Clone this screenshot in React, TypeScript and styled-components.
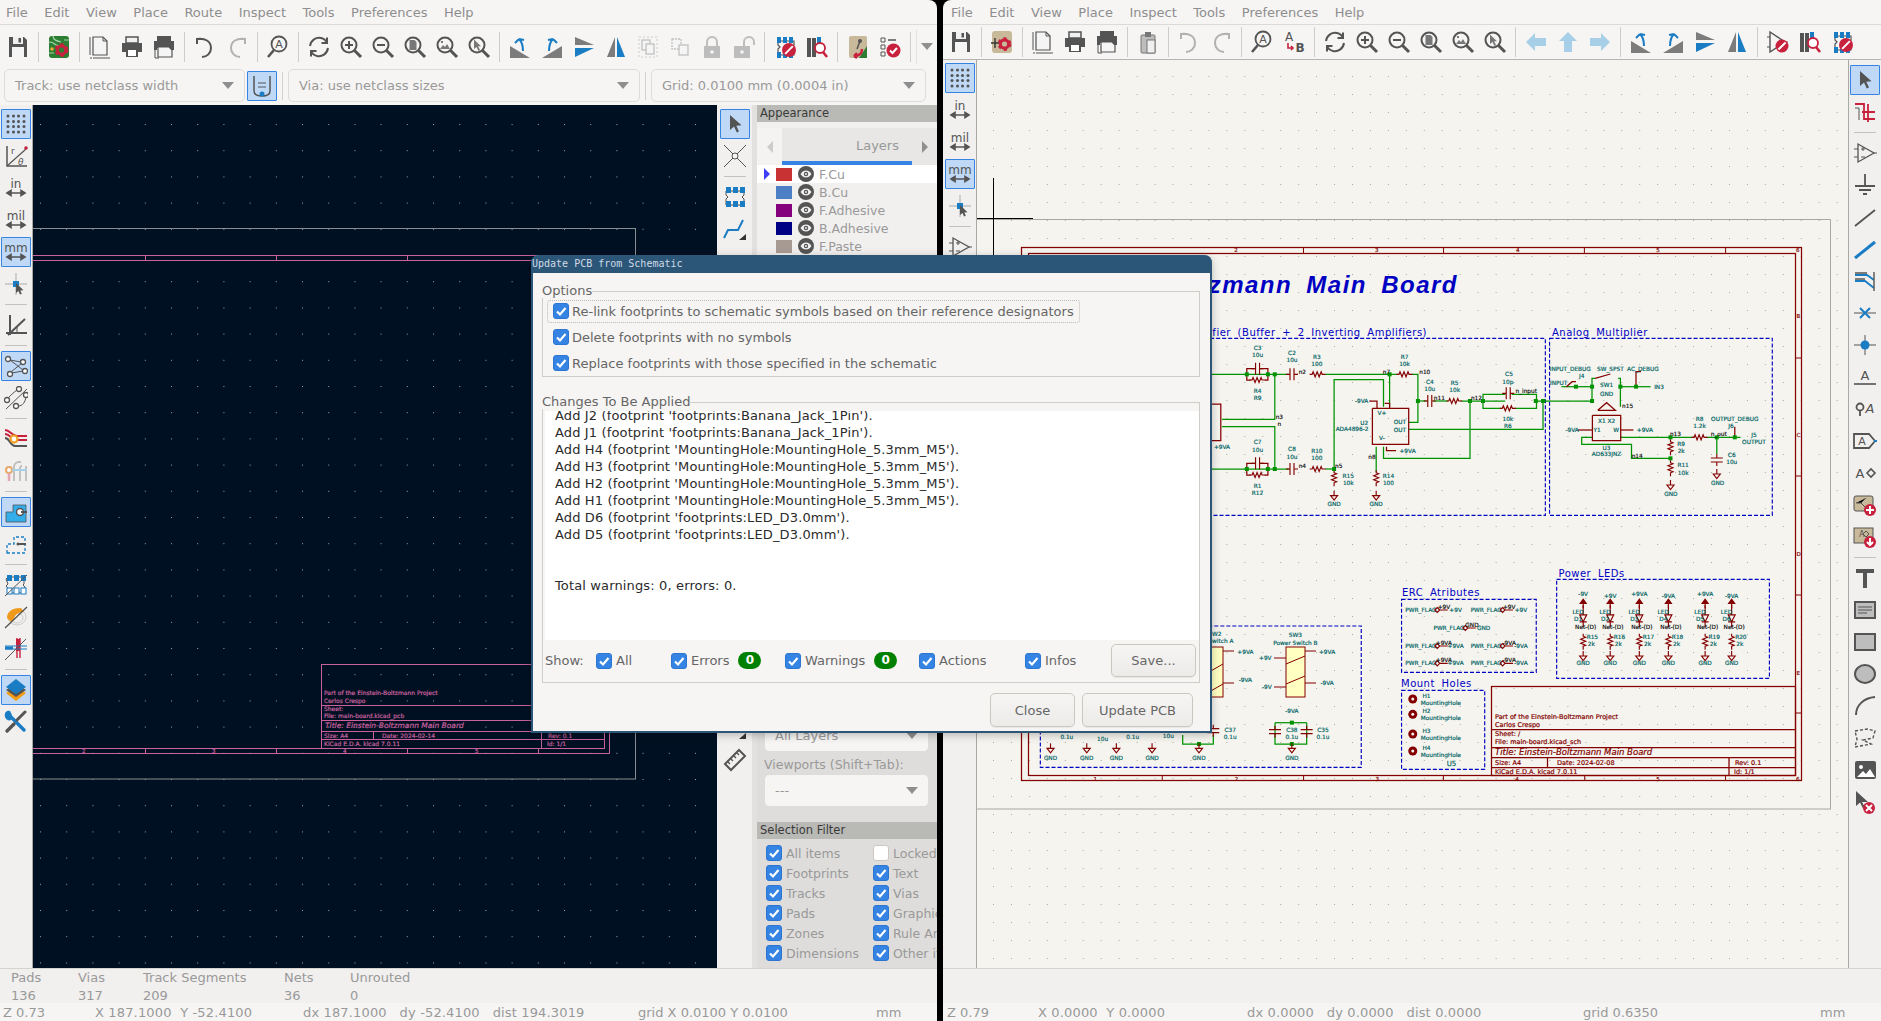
import React from 'react';
import styled, { createGlobalStyle } from 'styled-components';

const D = '#545454', B = '#1a7dc4', R = '#c8213e', G = '#bdbdbd';

const Global = createGlobalStyle`
  html, body { margin: 0; padding: 0; background: #000; overflow: hidden; }
  body { font-family: "DejaVu Sans", sans-serif; font-size: 13px; }
`;

const Desktop = styled.div`
  position: relative; width: 1881px; height: 1021px; display: flex; gap: 6px;
  background: #000; overflow: hidden;
`;
const Win = styled.div<{ $w: number; $right?: boolean }>`
  width: ${p => p.$w}px; height: 1021px; display: flex; flex-direction: column; flex: none;
  background: #f6f5f4; overflow: hidden; border-radius: ${p => (p.$right ? '8px 0 0 0' : '0 8px 0 0')};
`;
const MenuBar = styled.div<{ $pad: number }>`
  height: 24px; flex: none; display: flex; align-items: center; gap: 16.5px; padding-left: ${p => p.$pad}px;
  border-bottom: 1px solid #dcdad6; color: #8e8e8e; font-size: 13px;
`;
const Toolbar = styled.div<{ $h: number }>`
  height: ${p => p.$h}px; flex: none; display: flex; align-items: center; padding-left: 2px;
`;
const BtnBox = styled.div<{ $active?: boolean; $dim?: number }>`
  width: 30px; height: 30px; margin: 1px; flex: none; box-sizing: border-box;
  display: flex; align-items: center; justify-content: center; border-radius: 1px;
  background: ${p => (p.$active ? '#bed8f6' : 'transparent')};
  border: 1px solid ${p => (p.$active ? '#3584e4' : 'transparent')};
  & > svg { opacity: ${p => p.$dim ?? 1}; }
`;
const AuxBtn = styled(BtnBox)`
  margin: 2px 0 0 2px;
`;
const HSep = styled.div`
  width: 1px; height: 30px; margin: 0 4px; background: #cfcdc9; flex: none;
`;
const VSep = styled.div`
  width: 22px; height: 1px; margin: 4px 5px; background: #c4c2be; flex: none;
`;
const AuxBar = styled.div`
  height: 37px; flex: none; display: flex; align-items: flex-start; padding: 1px 0 0 4px; box-sizing: border-box;
`;
const Combo = styled.div<{ $w: number }>`
  width: ${p => p.$w}px; height: 33px; box-sizing: border-box; flex: none; display: flex; align-items: center;
  justify-content: space-between; padding: 0 10px; background: #f6f5f4; border: 1px solid #dedcd8;
  border-radius: 5px; color: #999; font-size: 13px;
`;
const Caret = styled.span`
  width: 0; height: 0; border-left: 6px solid transparent; border-right: 6px solid transparent;
  border-top: 7px solid #8f8f8f;
`;
const AuxSep = styled.div`
  width: 1px; height: 28px; margin: 3px 5px 0; background: #d3d1cd; flex: none;
`;
const OverflowBtn = styled.div`
  width: 20px; height: 34px; flex: none; display: flex; align-items: center; justify-content: center;
  border-left: 1px solid #e4e2df; margin-left: 1px;
`;
const Main = styled.div<{ $top?: boolean }>`
  flex: 1; min-height: 0; display: flex; ${p => (p.$top ? 'border-top: 1px solid #b4b4b0;' : '')}
`;
const VTool = styled.div<{ $w: number; $line?: 'l' | 'r'; $top: number }>`
  width: ${p => p.$w}px; flex: none; box-sizing: border-box; display: flex; flex-direction: column;
  padding-top: ${p => p.$top}px; background: #f1f0ef; overflow: hidden;
  ${p => (p.$line === 'r' ? 'border-right: 1px solid #a9a9a6;' : '')}
  ${p => (p.$line === 'l' ? 'border-left: 1px solid #a9a9a6;' : '')}
  align-items: center;
`;
const Gap = styled.div<{ $h: number }>`
  height: ${p => p.$h}px; flex: none;
`;
const PcbSvg = styled.svg`
  flex: 1; min-width: 0; display: block; background: #001023; height: 100%;
`;
const SchSvg = styled.svg`
  flex: 1; min-width: 0; display: block; background: #f5f4ef; height: 100%;
`;
const EyeSvg = styled.svg`
  width: 16px; height: 16px; margin-right: 5px; flex: none;
`;
const Side = styled.div`
  width: 185px; flex: none; display: flex; flex-direction: column; border-left: 5px solid #e2e1df;
  box-sizing: border-box; background: #f1f0ef; overflow: hidden;
`;
const PanelHead = styled.div`
  height: 17px; flex: none; background: #b9b9b6; color: #3a3a3a; font-size: 11.5px; line-height: 16px; padding-left: 3px;
`;
const TabStrip = styled.div`
  height: 37px; flex: none; margin-top: 6px; display: flex; align-items: center; background: #e8e7e6;
`;
const TabBack = styled.div`
  width: 25px; height: 37px; flex: none; background: #f4f3f2; display: flex; align-items: center; justify-content: center;
`;
const TabLabel = styled.div`
  width: 130px; height: 37px; flex: none; box-sizing: border-box; text-align: right; padding-right: 13px;
  line-height: 36px; border-bottom: 4px solid #3584e4; color: #999; font-size: 13px;
`;
const TabFwd = styled.div`
  flex: 1; display: flex; justify-content: center;
`;
const Tri = styled.span<{ $c: string }>`
  width: 0; height: 0; border-top: 6px solid transparent; border-bottom: 6px solid transparent;
  border-left: 6px solid ${p => p.$c};
`;
const TriL = styled.span`
  width: 0; height: 0; border-top: 6px solid transparent; border-bottom: 6px solid transparent;
  border-right: 6px solid #ccc;
`;
const LayerRow = styled.div<{ $on?: boolean }>`
  height: 18px; flex: none; display: flex; align-items: center; padding-left: 7px;
  background: ${p => (p.$on ? '#fff' : 'transparent')}; color: #999; font-size: 12.5px;
`;
const ArrowSlot = styled.div`
  width: 12px; flex: none; display: flex;
`;
const Swatch = styled.div<{ $c: string }>`
  width: 16px; height: 13px; flex: none; background: ${p => p.$c}; margin-right: 6px;
`;
const Spacer = styled.div`
  flex: 1;
`;
const Lower = styled.div`
  background: #dedddb; padding: 0 8px 15px 7px; flex: none;
`;
const PresetLabel = styled.div`
  color: #999; font-size: 12.5px; height: 22px; line-height: 25px;
`;
const SideCombo = styled(Combo)`
  width: 165px;
`;
const Filter = styled.div`
  background: #dedddb; height: 129px; flex: none; display: grid; grid-template-columns: 107px 107px;
  grid-auto-rows: 20px; padding: 4px 0 0 9px; box-sizing: border-box;
`;
const FilterItem = styled.div`
  display: flex; align-items: center; gap: 4px; color: #999; font-size: 12.5px; white-space: nowrap;
`;
const Box = styled.div<{ $off?: boolean }>`
  width: 16px; height: 16px; flex: none; box-sizing: border-box; border-radius: 3px;
  display: flex; align-items: center; justify-content: center;
  background: ${p => (p.$off ? '#fff' : '#3584e4')};
  border: 1px solid ${p => (p.$off ? '#cdc7c2' : '#2c76d2')};
`;
const Messages = styled.div`
  height: 35px; flex: none; background: #f1f0ef; border-top: 1px solid #d5d3cf; box-sizing: border-box;
  display: flex; color: #999; font-size: 13px;
`;
const MsgCol = styled.div<{ $w: number }>`
  width: ${p => p.$w}px; flex: none; line-height: 18px;
`;
const Status = styled.div`
  height: 18px; flex: none; display: flex; align-items: center; color: #999; font-size: 13px; white-space: pre;
`;
const Cell = styled.div<{ $w: number; $sp?: number }>`
  width: ${p => p.$w}px; flex: none; letter-spacing: ${p => p.$sp ?? 0}px;
`;

/* ---- dialog ---- */
const Dialog = styled.div`
  position: absolute; left: 531px; top: 255px; width: 681px; height: 478px; box-sizing: border-box;
  border: 2px solid #2c5678; border-top: 0; border-radius: 8px 8px 0 0; background: #f6f5f4;
  display: flex; flex-direction: column; box-shadow: 0 2px 8px rgba(0,0,0,.25);
`;
const TitleBar = styled.div`
  height: 18px; flex: none; margin: 0 -2px; background: #2c5678; border-radius: 8px 8px 0 0;
  color: #cfdbe6; font-family: "DejaVu Sans Mono", monospace; font-size: 10px; line-height: 18px; padding-left: 1px;
`;
const DlgBody = styled.div`
  flex: 1; min-height: 0; display: flex; flex-direction: column; padding: 11px 10px 0 9px;
`;
const Frame = styled.fieldset<{ $h?: number }>`
  margin: 0; padding: 0; min-width: 0; border: 1px solid #cfcdc8; box-sizing: border-box;
  display: flex; flex-direction: column; flex: none;
  height: ${p => p.$h}px;
`;
const Legend = styled.legend`
  padding: 0; margin: 0 0 0 -1px; height: 14px; line-height: 14px; color: #666; font-size: 13px;
`;
const OptRow = styled.div`
  height: 26px; flex: none; display: flex; align-items: center; gap: 3px; padding-left: 10px;
  color: #666; font-size: 13px;
`;
const Focus = styled.div`
  display: flex; align-items: center; gap: 3px; height: 23px; box-sizing: border-box; flex: none;
  padding: 0 5px; margin-left: -6px; border: 1px dotted #bdbab5; border-radius: 3px;
`;
const Log = styled.div`
  margin: 2px 0 0 2px; width: 654px; height: 229px; background: #fff; overflow: hidden; flex: none;
`;
const LogInner = styled.div`
  margin-top: -4px; padding-left: 10px; color: #2b2b2b; font-size: 13px; line-height: 17px; white-space: pre; letter-spacing: .14px;
`;
const ShowRow = styled.div`
  height: 41px; flex: none; display: flex; align-items: center; padding-left: 2px; color: #666; font-size: 13px;
`;
const ShowCell = styled.div<{ $w: number }>`
  width: ${p => p.$w}px; flex: none; display: flex; align-items: center; gap: 4px;
`;
const Badge = styled.span`
  width: 23px; height: 17px; margin-left: 5px; border-radius: 9px; background: #008000; color: #fff; font-weight: bold;
  font-size: 12px; line-height: 17px; text-align: center;
`;
const Btn = styled.div<{ $w: number; $h: number }>`
  width: ${p => p.$w}px; height: ${p => p.$h}px; flex: none; box-sizing: border-box; display: flex; align-items: center; justify-content: center;
  border: 1px solid #cdc7c2; border-radius: 5px; color: #666; font-size: 13px;
  background: linear-gradient(#f6f5f4, #edebe9); box-shadow: 0 1px 1px rgba(0,0,0,.06);
`;
const BtnRow = styled.div`
  flex: none; display: flex; justify-content: flex-end; gap: 7px; padding: 10px 7px 0 0;
`;

/* ---- svg text kinds ---- */
const Net = styled.text<{ $s?: number; $anchor?: string }>`
  font-family: "DejaVu Sans", sans-serif; font-size: ${p => p.$s ?? 5.8}px; fill: #006464; stroke: #006464; stroke-width: .18px;
  text-anchor: ${p => p.$anchor ?? 'middle'};
`;
const Lab = styled(Net)`
  fill: #111; stroke: #111;
`;
const Red = styled.text<{ $s?: number; $i?: boolean }>`
  font-family: "DejaVu Sans", sans-serif; font-size: ${p => p.$s ?? 6.5}px; fill: #840000; stroke: #840000; stroke-width: .2px;
  font-style: ${p => (p.$i ? 'italic' : 'normal')};
`;
const BlueTitle = styled.text`
  font-family: "Liberation Sans", sans-serif; font-size: 24px; font-weight: bold; font-style: italic; fill: #0000c2; text-anchor: end;
  letter-spacing: 1.5px; word-spacing: 6px;
`;
const BlueNote = styled.text<{ $end?: boolean }>`
  font-family: "DejaVu Sans", sans-serif; font-size: 10px; fill: #0000c2; letter-spacing: .5px; word-spacing: 3px;
  text-anchor: ${p => (p.$end ? 'end' : 'start')};
`;
const Pink = styled.text<{ $s?: number; $i?: boolean }>`
  font-family: "DejaVu Sans", sans-serif; font-size: ${p => p.$s ?? 6}px; fill: #c9619f; stroke: #c9619f; stroke-width: .2px;
  font-style: ${p => (p.$i ? 'italic' : 'normal')};
`;

/* ---- icons ---- */
const Mag = ({ c }: { c?: React.ReactNode }) => (
  <>
    <circle cx="10" cy="10" r="7.5" fill="none" stroke={D} strokeWidth="2" />
    <path d="M15.5 15.5 22 22" stroke={D} strokeWidth="3" />
    {c}
  </>
);
const Gear = ({ x, y, r }: { x: number; y: number; r: number }) => (
  <>
    <circle cx={x} cy={y} r={r} fill="none" stroke={R} strokeWidth={r * 0.5} strokeDasharray={`${r * 0.55} ${r * 0.55}`} />
    <circle cx={x} cy={y} r={r * 0.75} fill="none" stroke={R} strokeWidth={r * 0.55} />
  </>
);
const Check = () => (
  <svg width="12" height="12" viewBox="0 0 12 12"><path d="M2 6.5 5 9.5 10.5 3" fill="none" stroke="#fff" strokeWidth="2.2" /></svg>
);
const NoCircle = ({ x = 17, y = 17, r = 6 }: { x?: number; y?: number; r?: number }) => (
  <>
    <circle cx={x} cy={y} r={r} fill={R} />
    <path d={`M${x - r * 0.55} ${y + r * 0.55}L${x + r * 0.55} ${y - r * 0.55}`} stroke="#fff" strokeWidth="2" />
  </>
);
const FpPads = () => (
  <>
    <path d="M5 6h16v4l-2 2 2 2v6H5v-6l2-2-2-2z" fill="none" stroke={D} strokeWidth="1.2" />
    {[4, 10, 16].map(x => <rect key={x} x={x} y="2" width="4" height="6" fill={B} />)}
    {[4, 10, 16].map(x => <rect key={x + 1} x={x} y="17" width="4" height="6" fill={B} />)}
  </>
);
const UnitIcon = ({ t, s }: { t: string; s: number }) => (
  <>
    <text x="12" y="12" textAnchor="middle" fontFamily="DejaVu Sans, sans-serif" fontSize={s} fill={D}>{t}</text>
    <path d="M3 17h18M3 17l4-2.5v5zM21 17l-4-2.5v5z" stroke={D} strokeWidth="1.6" fill={D} />
  </>
);
const Arrow = () => <path d="M7 3v15l4-3.5 2.8 6 2.2-1-2.7-5.8 5.2-.4z" fill={D} />;

const icons: Record<string, React.ReactNode> = {
  save: <><path fill={D} d="M3 2h15l3 3v17H3z" /><rect x="7" y="2" width="10" height="7" fill="#f0f0f0" /><rect x="12.5" y="3" width="2.5" height="4.5" fill={D} /><rect x="6" y="12" width="12" height="10" fill="#f5f5f5" /></>,
  pcbgear: <><rect x="2" y="1" width="20" height="22" rx="3" fill="#2d7d32" /><path d="M2 7c6 0 6 4 10 4M6 1c0 4 4 5 8 6M22 5h-5M2 18h5" stroke="#a3d6ad" fill="none" strokeWidth="1.2" /><circle cx="5" cy="14" r="1.800" fill="#f0a93a" /><Gear x={14.5} y={15} r={5.5} /></>,
  schgear: <><rect x="2" y="1" width="20" height="22" rx="3" fill="#c8b99a" /><path d="M1 13h8M5 8v10" stroke="#333" strokeWidth="1.4" /><Gear x={14.5} y={14} r={5.5} /></>,
  page: <><path d="M5 2h10l4 4v14H5z" fill="#f4f4f4" stroke={D} strokeWidth="1.2" /><path d="M15 2v4h4M2 2v18M22 23H5M2 23h2" stroke={D} strokeWidth="1" fill="none" /></>,
  print: <><path d="M6 2h12v6H6z" fill="#f0f0f0" stroke={D} strokeWidth="1.5" /><path d="M2 8h20v9h-4v-3H6v3H2z" fill={D} /><path d="M6 14h12v8H6z" fill={D} /><rect x="8" y="15" width="8" height="6" fill="#fff" /></>,
  plot: <><path d="M5 1h14v5H5z" fill={D} /><path d="M2 6h20v9h-3v-2H5v2H2z" fill={D} /><path d="M6 12h11l3 3v7H6z" fill="#f5f5f5" stroke={D} strokeWidth="1.2" /><path d="M3 23h4M3 15v8" stroke={D} /></>,
  undo: <path d="M9 4H4v5M4 4c8-1 14 2 14 9 0 5-4 9-9 9" fill="none" stroke={D} strokeWidth="2" />,
  redo: <path d="M15 4h5v5M20 4c-8-1-14 2-14 9 0 5 4 9 9 9" fill="none" stroke={D} strokeWidth="2" />,
  find: <><circle cx="13" cy="9" r="7.5" fill="none" stroke={D} strokeWidth="1.8" /><text x="13" y="13" textAnchor="middle" fontSize="11" fontFamily="DejaVu Sans, sans-serif" fill={D}>A</text><path d="M8 15 2 22" stroke={D} strokeWidth="2.6" /></>,
  replace: <><text x="7" y="11" textAnchor="middle" fontSize="12" fontFamily="DejaVu Sans, sans-serif" fill={D}>A</text><text x="18" y="22" textAnchor="middle" fontSize="12" fontWeight="bold" fontFamily="DejaVu Sans, sans-serif" fill={D}>B</text><path d="M6 13v5h5M9 16l2 2-2 2" stroke={R} strokeWidth="1.6" fill="none" /></>,
  refresh: <path d="M3 11C4 5 9 2 14 3c3 .7 5 2.500 6 5M20 2.500V8h-5.500M21 13c-1 6-6 9-11 8-3-.7-5-2.500-6-5M4 21.500V16h5.500" fill="none" stroke={D} strokeWidth="2" />,
  zin: <Mag c={<path d="M10 6v8M6 10h8" stroke={D} strokeWidth="2" />} />,
  zout: <Mag c={<path d="M6 10h8" stroke={D} strokeWidth="2" />} />,
  zfit: <Mag c={<path d="M6.500 5h5l2 2v8h-7z" fill="#777" />} />,
  zobj: <Mag c={<path d="M5 14l3-4 2 2 2-3 3 5z M6 6h2v2H6z" fill="#777" />} />,
  zsel: <Mag c={<path d="M7 4.500v9.500l2.500-2 2 4 1.600-.8-2-4H14z" fill="#777" />} />,
  rotl: <><path d="M2 23V11l20 12z" fill="#7c7c7c" /><path d="M15 16C15 11 14 7 11 4M11 4 7 8M11 4l5 1" fill="none" stroke={B} strokeWidth="2" /></>,
  rotr: <><path d="M22 23V11L2 23z" fill="#7c7c7c" /><path d="M9 16c0-5 1-9 4-12M13 4l4 4M13 4 8 5" fill="none" stroke={B} strokeWidth="2" /></>,
  flip: <><path d="M3 2l19 8H3z" fill="#7c7c7c" /><path d="M3 13h19L3 22z" fill={B} /></>,
  mirror: <><path d="M11 2v20H3z" fill="#7c7c7c" /><path d="M13 2v20h8z" fill={B} /></>,
  group: <><rect x="3" y="2" width="18" height="20" fill="none" stroke="#ccc" strokeDasharray="2 2" /><rect x="6" y="5" width="8" height="10" fill="#f5f5f5" stroke="#c0c0c0" strokeWidth="1.3" /><rect x="10" y="9" width="8" height="10" fill="#f5f5f5" stroke="#c0c0c0" strokeWidth="1.3" /></>,
  ungroup: <><rect x="4" y="4" width="9" height="10" fill="#f5f5f5" stroke="#c0c0c0" strokeWidth="1.3" strokeDasharray="2 1" /><rect x="11" y="10" width="9" height="10" fill="#f5f5f5" stroke="#c0c0c0" strokeWidth="1.3" /></>,
  lock: <><path d="M7 11V7a5 5 0 0 1 10 0v4" fill="none" stroke={G} strokeWidth="2" /><rect x="4" y="11" width="16" height="12" fill={G} /><circle cx="12" cy="17" r="1.800" fill="#f5f5f5" /></>,
  unlock: <><path d="M12 11V7a5 5 0 0 1 10 0v3" fill="none" stroke={G} strokeWidth="2" /><rect x="2" y="11" width="16" height="12" fill={G} /><circle cx="10" cy="17" r="1.800" fill="#f5f5f5" /></>,
  fpupd: <><FpPads /><NoCircle x={16} y={15} r={7} /></>,
  lib: <><rect x="2" y="3" width="4" height="19" fill={D} /><rect x="7" y="3" width="4" height="19" fill={D} /><rect x="12" y="2" width="4" height="12" fill={B} /><circle cx="15" cy="13" r="5" fill="#fff" stroke={R} strokeWidth="1.8" /><path d="M18 17l4 5" stroke={R} strokeWidth="2.6" /></>,
  net: <><rect x="3" y="1" width="18" height="22" rx="2" fill="#c8b99a" /><path d="M13 23h8V11z" fill="#2d7d32" /><circle cx="14" cy="6" r="2" fill={D} /><path d="M14 6 11 14" stroke={D} strokeWidth="1.600" /><path d="M16 14c0 5-3 7-8 7M8 21l3-3M8 21l3 2" fill="none" stroke={R} strokeWidth="2.400" /></>,
  check: <><path d="M3 3h4v4H3zM3 10h4v4H3zM3 17h4v4H3z" fill="none" stroke={D} /><path d="M10 5h8M10 12h2" stroke={D} strokeWidth="1.500" /><circle cx="15.500" cy="15.500" r="7" fill={R} /><path d="M12 15.500l2.500 2.500 4.500-5" fill="none" stroke="#fff" strokeWidth="2" /></>,
  paste: <><rect x="5" y="5" width="14" height="18" rx="1" fill="#bdbdbd" stroke="#777" /><rect x="9" y="2" width="6" height="5" fill="#777" /><rect x="11" y="10" width="8" height="13" fill="#f0f0f0" stroke="#777" /></>,
  left: <path d="M2 12 11 3v5h11v8H11v5z" fill="#a7d0e8" />,
  up: <path d="M12 2l9 9h-5v11H8V11H3z" fill="#a7d0e8" />,
  right: <path d="M22 12l-9-9v5H2v8h11v5z" fill="#a7d0e8" />,
  sym: <><path d="M4 2v20l15-10z" fill="none" stroke={D} strokeWidth="1.400" /><path d="M1 7h3M1 17h3M19 12h3" stroke={D} /><NoCircle x={16} y={16} r={6.500} /></>,
  dots: <g fill={D}>{[4, 9.500, 14.500, 20].flatMap(y => [4, 9.500, 14.500, 20].map(x => <circle key={`${x}-${y}`} cx={x} cy={y} r="1.500" />))}</g>,
  polar: <><path d="M3 2v20h20" stroke={D} strokeWidth="1.500" fill="none" /><path d="M3 22 22 5" stroke={D} strokeWidth="1.200" /><circle cx="22" cy="4" r="1.800" fill={R} /><text x="7" y="10" fontSize="9" fontFamily="DejaVu Sans, sans-serif" fill={D}>r</text><text x="14" y="21" fontSize="9" fontStyle="italic" fontFamily="DejaVu Sans, sans-serif" fill={D}>θ</text></>,
  in: <UnitIcon t="in" s={12} />, mil: <UnitIcon t="mil" s={12} />, mm: <UnitIcon t="mm" s={12} />,
  cursor: <><path d="M12 1v22M1 12h22" stroke="#aaa" /><path d="M9 9h6v6H9z" fill={B} /><path d="M12 11v10l2.500-2 1.500 3.500 1.800-.8-1.500-3.300 3.200-.2z" fill={D} /></>,
  origin: <><path d="M6 2v20M2 20h21" stroke={D} strokeWidth="2" /><path d="M4 22 21 6" stroke={D} strokeWidth="2" /><path d="M13 14v6" stroke={D} /></>,
  rats: <><g fill="#fff" stroke={D} strokeWidth="1.300"><circle cx="4" cy="5" r="2.500" /><circle cx="19" cy="8" r="2.500" /><circle cx="21" cy="17" r="2.500" /><circle cx="6" cy="20" r="2.500" /></g><path d="M6 6l11 2M6 6l13 10M7 18 18 9M8 19l11-2" stroke={D} fill="none" /></>,
  ratsc: <><g fill="#fff" stroke={D} strokeWidth="1.300"><circle cx="15" cy="3" r="2.500" /><circle cx="22" cy="9" r="2.500" /><circle cx="3" cy="14" r="2.500" /><circle cx="12" cy="20" r="2.500" /></g><path d="M2 23 23 3" stroke={D} /><path d="M4 12c3-3 5-5 9-8M14 20c5 0 7-4 8-9" stroke={D} fill="none" /></>,
  track: <><path d="M1 3c5 0 7 6 12 6h10" stroke={R} strokeWidth="2" fill="none" /><path d="M1 7c5 0 7 6 12 6h10" stroke={R} strokeWidth="2" fill="none" /><path d="M1 11c5 0 5 8 10 8h12" stroke={D} strokeWidth="2" fill="none" /><circle cx="10" cy="12" r="3.500" fill="#fff" stroke="#f0a020" strokeWidth="2.200" /></>,
  via: <><path d="M10 22V8a5 5 0 0 1 5-5h2M16 22V9a2 2 0 0 1 2-2M22 22V7" stroke={G} strokeWidth="1.800" fill="none" /><circle cx="5" cy="11" r="3" fill="#fff" stroke="#e8a86a" strokeWidth="2" /><path d="M5 14v8" stroke="#e6a8b0" strokeWidth="2.600" /><path d="M8 11h15" stroke="#a7cfe8" strokeWidth="2" /></>,
  fp: <><path d="M2 22V12h7V5h13v17z" fill="#33aeea" stroke={D} strokeWidth=".8" /><circle cx="16" cy="12" r="3.500" fill="#fff" stroke={D} strokeWidth="1.500" /><path d="M17 12h6" stroke={D} strokeWidth="2" /></>,
  fpo: <><path d="M3 21V12h7V5h11v16z" fill="none" stroke={B} strokeWidth="1.300" strokeDasharray="3 2" /><path d="M14 12h8" stroke={D} strokeWidth="2" /><circle cx="14" cy="12" r="1.500" fill={D} /></>,
  pads: <><path d="M2 6l2-2h16v7l-1 1 2 2v6H4v-5l-2-2 2-2z" fill="none" stroke={D} /><g fill={B}>{[3, 10, 17].map(x => <rect key={x} x={x} y="2" width="5" height="6" />)}</g><g fill="#fff" stroke={B}>{[3, 10, 17].map(x => <rect key={x} x={x} y="15" width="5" height="6" />)}</g><path d="M1 23 23 2" stroke={D} /></>,
  padsb: <><path d="M3 6h18v4l-2 2 2 2v6H3v-6l2-2-2-2z" fill="none" stroke={D} /><g fill={B}>{[3, 10, 17].flatMap(x => [<rect key={x} x={x} y="2" width="5" height="6" />, <rect key={x + 1} x={x} y="16" width="5" height="6" />])}</g></>,
  zone: <><ellipse cx="13" cy="12" rx="9" ry="8" fill="none" stroke="#ccc" /><ellipse cx="13" cy="13" rx="6" ry="5" fill="none" stroke="#ccc" /><path d="M3 13c0-7 6-10 14-10l3 4c-5 0-9 2-10 7l-3 3z" fill="#ef9a1a" /><path d="M1 23 23 2" stroke={D} strokeWidth="1.300" /></>,
  tracks: <><path d="M13 1v20M16 1v20" stroke={R} strokeWidth="1.400" /><rect x="12" y="2" width="4" height="12" fill={R} /><path d="M1 11h8" stroke={B} strokeWidth="3" /><path d="M1 12h22M1 9h22" stroke={B} strokeWidth="1" /><path d="M1 23 22 2" stroke={D} /></>,
  layers: <><path d="M12 9l10 6-10 8-10-8z" fill="#f39c12" /><path d="M12 6l10 6-10 7-10-7z" fill={D} /><path d="M12 1l10 8-10 7-10-7z" fill={B} /></>,
  wrench: <><path d="M6 6 20 20" stroke={B} strokeWidth="3.400" strokeLinecap="round" /><path d="M2 3l3 3 3-1-2-4C3 0 0 2 1 7c1 3 4 4 6 3l1-3z" fill={B} /><path d="M21 2 13 10" stroke={D} strokeWidth="3" strokeLinecap="round" /><path d="M10 14 3 21" stroke={D} strokeWidth="3.400" strokeLinecap="round" /></>,
  arrow: <Arrow />,
  cross: <><path d="M1 1l22 22M23 1 1 23" stroke={D} /><circle cx="12" cy="12" r="3" fill="#f5f5f5" stroke={D} /></>,
  trk: <><path d="M1 21l4-8h10l5-10" fill="none" stroke={B} strokeWidth="2" /><path d="M23 23h-7l7-6z" fill="#333" /></>,
  dim: <><path d="M2 3h17M2 6v-6" stroke={D} fill="none" /><path d="M23 23h-7l7-6z" fill="#333" /></>,
  ruler: <><path d="M16 2l6 6L8 22l-6-6z" fill="none" stroke={D} strokeWidth="2" /><path d="M8 11l2 2M11 8l2 2M14 5l2 2M5 14l2 2" stroke={D} strokeWidth="1.400" /></>,
  wirebus: <><path d="M2 4h9v15h11M15 4v18M9 12h13" stroke={R} strokeWidth="1.800" fill="none" /><path d="M2 8h4v12" stroke={D} fill="none" /></>,
  opamp: <><path d="M5 3v18l16-9z" fill="none" stroke={D} strokeWidth="1.300" /><path d="M1 8h4M1 16h4M21 12h3" stroke={D} /><path d="M8 8h4M10 6v4M8 16h4" stroke={D} /></>,
  gnd: <path d="M12 1v12M2 13h20M6 17h12M10 21h4" stroke={D} strokeWidth="1.800" />,
  line: <path d="M2 21 22 5" stroke={D} strokeWidth="1.800" />,
  bus: <path d="M2 21 22 5" stroke={B} strokeWidth="3" />,
  entry: <><path d="M2 6h12l7 5M2 12h10l9 7" stroke={B} strokeWidth="1.800" fill="none" /><path d="M2 4h12M2 10h10M21 3v19" stroke={D} strokeWidth="1.400" /></>,
  nc: <><path d="M1 12h22" stroke={D} /><path d="M7 7l10 10M17 7 7 17" stroke={B} strokeWidth="2" /></>,
  junction: <><path d="M1 12h22M12 2v20" stroke={D} /><circle cx="12" cy="12" r="4.500" fill={B} /></>,
  label: <><text x="12" y="15" textAnchor="middle" fontSize="13" fontFamily="DejaVu Sans, sans-serif" fill={D}>A</text><path d="M1 19h22" stroke={D} strokeWidth="1.600" /></>,
  netclass: <><circle cx="7" cy="10" r="3.500" fill="none" stroke={D} strokeWidth="1.800" /><path d="M7 14v5" stroke={D} strokeWidth="1.800" /><text x="17" y="16" textAnchor="middle" fontSize="13" fontStyle="italic" fontFamily="DejaVu Sans, sans-serif" fill={D}>A</text></>,
  hlabel: <><path d="M1 5h15l6 7-6 7H1z" fill="none" stroke={D} strokeWidth="1.800" /><text x="9" y="16" textAnchor="middle" fontSize="11" fontFamily="DejaVu Sans, sans-serif" fill={D}>A</text><path d="M21 12h3" stroke={B} strokeWidth="2" /></>,
  global: <><text x="7" y="17" textAnchor="middle" fontSize="13" fontFamily="DejaVu Sans, sans-serif" fill={D}>A</text><path d="M14 12l4-4 4 4-4 4z" fill="none" stroke={D} strokeWidth="1.600" /></>,
  sheet: <><rect x="1" y="3" width="19" height="15" rx="2" fill="#c8b99a" stroke={D} /><path d="M3 10h5l5-5M8 10l5 5" stroke={D} /><circle cx="17" cy="17" r="6" fill={R} /><path d="M13 17h8M17 13v8" stroke="#fff" strokeWidth="2" /></>,
  imp: <><rect x="1" y="3" width="19" height="15" fill="#c8b99a" stroke={D} /><text x="6" y="12" fontSize="8" fontFamily="DejaVu Sans, sans-serif" fill={D}>A</text><path d="M10 9l3-3 3 3-3 3z" fill="none" stroke={D} /><circle cx="17" cy="17" r="6" fill={R} /><path d="M17 13v7M14 17l3 3 3-3" stroke="#fff" strokeWidth="2" fill="none" /></>,
  T: <path d="M3 3h18v4H14v15h-4V7H3z" fill={D} />,
  tbox: <><rect x="2" y="4" width="20" height="16" fill="#bdbdbd" stroke={D} strokeWidth="2" /><path d="M5 9h14M5 12h14M5 15h9" stroke={D} /></>,
  rect: <rect x="2" y="4" width="20" height="16" fill="#bdbdbd" stroke={D} strokeWidth="2" />,
  circ: <ellipse cx="12" cy="12" rx="10" ry="9" fill="#bdbdbd" stroke={D} strokeWidth="2" />,
  arc: <path d="M3 21C3 11 11 4 22 3" fill="none" stroke={D} strokeWidth="2" />,
  bez: <path d="M2 5l12-2 8 2-2 7-10 2 8 4-16 3 2-8z" fill="none" stroke={D} strokeWidth="1.400" strokeDasharray="3 2" />,
  image: <><rect x="2" y="3" width="21" height="18" rx="2" fill={D} /><circle cx="8" cy="9" r="2" fill="#fff" /><path d="M4 19l6-6 3 3 4-5 5 8z" fill="#fff" /></>,
  del: <><path d="M3 1v15l4-3.500 3 6 2-1-3-5.500h6z" fill={D} /><circle cx="16" cy="18" r="6" fill={R} /><path d="M13 15l6 6M19 15l-6 6" stroke="#fff" strokeWidth="2" /></>,
  trackw: <><path d="M4 2v15c0 3 2 5 8 5s8-2 8-5V2" fill="none" stroke={D} strokeWidth="1.500" /><path d="M8 9h8M8 13h8" stroke={D} /><circle cx="12" cy="20" r="2.500" fill={B} /></>,
};

const Ic = ({ n }: { n: string }) => <svg width="24" height="24" viewBox="0 0 24 24">{icons[n]}</svg>;

/* spec strings: "|" separator, "*" active, "~" dimmed */
const parse = (s: string) => s.trim().split(/\s+/);
const Tools = ({ spec, vert }: { spec: string; vert?: boolean }) => (
  <>
    {parse(spec).map((t, i) => {
      if (t === '|') return vert ? <VSep key={i} /> : <HSep key={i} />;
      const active = t.startsWith('*');
      const dim = t.startsWith('~');
      return (
        <BtnBox key={i} $active={active} $dim={dim ? 0.42 : 1}>
          <Ic n={t.replace(/^[*~]/, '')} />
        </BtnBox>
      );
    })}
  </>
);

const Menu = ({ items, pad }: { items: string[]; pad: number }) => (
  <MenuBar $pad={pad}>{items.map(m => <span key={m}>{m}</span>)}</MenuBar>
);

/* ---- schematic drawing ---- */
type Z = (x: number, y: number) => [number, number];
const z7: Z = (x, y) => [1200 + x / 2.613, 230 + y / 3];
const z8: Z = (x, y) => [1000 + x / 1.96, 540 + y / 3];

const Wire = ({ p, z, c = '#009300' }: { p: number[]; z: Z; c?: string }) => {
  const pts: string[] = [];
  for (let i = 0; i < p.length; i += 2) pts.push(z(p[i], p[i + 1]).map(n => n.toFixed(1)).join(','));
  return <polyline points={pts.join(' ')} fill="none" stroke={c} strokeWidth="1.250" />;
};
const Dash = ({ r, z }: { r: number[]; z: Z }) => {
  const [a, b] = z(r[0], r[1]);
  const [c, d] = z(r[2], r[3]);
  return <rect x={a} y={b} width={c - a} height={d - b} fill="none" stroke="#0000c2" strokeWidth="1.150" strokeDasharray="4 2" />;
};
const Place = ({ at, z, rot, children }: { at: number[]; z: Z; rot?: number; children: React.ReactNode }) => {
  const [x, y] = z(at[0], at[1]);
  return <g transform={`translate(${x} ${y}) rotate(${rot ?? 0})`} stroke="#840000" fill="none" strokeWidth="1.150">{children}</g>;
};
const ResG = () => <path d="M-8 0h2.500l1-2.500 2 5 2-5 2 5 2-5 1 2.500H8" />;
const CapG = () => <path d="M-6 0h4M-2-6V6M2-6V6M2 0h4" />;
const GndG = () => <><path d="M0-5V0" /><path d="M-3.500 0h7L0 4.500z" /></>;
const PwrG = () => <><path d="M0 5V0" /><path d="M-3 0h6L0-4z" fill="#840000" /></>;

const Res = ({ a, z, v }: { a: number[]; z: Z; v?: boolean }) => <Place at={a} z={z} rot={v ? 90 : 0}><ResG /></Place>;
const Cap = ({ a, z, v }: { a: number[]; z: Z; v?: boolean }) => <Place at={a} z={z} rot={v ? 90 : 0}><CapG /></Place>;
const Gnd = ({ a, z }: { a: number[]; z: Z }) => <Place at={a} z={z}><GndG /></Place>;
const Pwr = ({ a, z }: { a: number[]; z: Z }) => <Place at={a} z={z}><PwrG /></Place>;
const Dot = ({ a, z }: { a: number[]; z: Z }) => {
  const [x, y] = z(a[0], a[1]);
  return <rect x={x - 2} y={y - 2} width="4" height="4" fill="#009300" />;
};
const T = ({ a, z, t, kind, s, anchor }: { a: number[]; z: Z; t: string; kind?: 'l'; s?: number; anchor?: string }) => {
  const [x, y] = z(a[0], a[1]);
  const C = kind === 'l' ? Lab : Net;
  return <C x={x} y={y + 2} $s={s} $anchor={anchor}>{t}</C>;
};

const wires7 = [
  [30, 433, 235, 433], [198, 433, 198, 568, 60, 568], [60, 590, 198, 590, 198, 717], [30, 717, 235, 717],
  [330, 433, 520, 433], [555, 433, 572, 433, 572, 577, 548, 577], [353, 717, 353, 449, 482, 449, 482, 530], [498, 433, 498, 530],
  [330, 717, 353, 717], [572, 513, 595, 513], [612, 513, 650, 513], [685, 513, 800, 513], [708, 513, 708, 685, 482, 685, 482, 650],
  [742, 513, 742, 493, 800, 493], [817, 493, 882, 493, 882, 535, 825, 535], [790, 535, 742, 535, 742, 513], [882, 513, 1027, 513],
  [899, 513, 899, 598, 548, 598], [947, 470, 1027, 470], [1035, 445, 1027, 445, 1027, 513], [1095, 445, 1101, 445, 1101, 530],
  [1101, 470, 1180, 470], [1102, 622, 1290, 622], [1325, 622, 1415, 622], [1028, 622, 1000, 622, 1000, 643, 1130, 643, 1130, 685, 1232, 685],
  [1353, 622, 1353, 672], [463, 650, 463, 725],
];
const dots7 = [[125, 433], [180, 433], [198, 433], [125, 717], [180, 717], [198, 717], [353, 717], [498, 433], [572, 513], [708, 513], [742, 513], [880, 513], [899, 513], [985, 470], [1027, 470], [1027, 513], [1101, 470], [1142, 470], [1232, 622], [1232, 685], [1353, 622], [1400, 622]];
const res7h = [[153, 450], [310, 433], [537, 433], [667, 513], [807, 535], [153, 735], [310, 717], [1308, 622]];
const res7v = [[353, 745], [463, 745], [1232, 652], [1232, 715]];
const cap7h = [[153, 416], [243, 433], [603, 513], [808, 490], [153, 700], [243, 717]];
const gnd7 = [[353, 797], [463, 797], [1232, 765], [1353, 732]];
const text7: [number, number, string][] = [
  [153, 353, 'C3'], [153, 374, '10u'], [153, 482, 'R4'], [153, 503, 'R9'], [243, 370, 'C2'], [243, 390, '10u'], [308, 380, 'R3'], [308, 401, '100'],
  [537, 380, 'R7'], [537, 401, '10k'], [603, 455, 'C4'], [603, 476, '10u'], [668, 460, 'R5'], [668, 481, '10k'], [810, 433, 'C5'], [807, 455, '10p'],
  [807, 567, '10k'], [807, 588, 'R6'], [153, 637, 'C7'], [153, 659, '10u'], [153, 767, 'R1'], [153, 788, 'R12'], [243, 658, 'C8'], [243, 680, '10u'],
  [308, 662, 'R10'], [308, 684, '100'], [390, 738, 'R15'], [390, 760, '10k'], [495, 738, 'R14'], [495, 760, '100'], [353, 823, 'GND'], [463, 823, 'GND'],
  [432, 578, 'U2'], [400, 598, 'ADA4896-2'], [60, 652, '+9VA'], [970, 417, 'INPUT_DEBUG'], [1075, 417, 'SW_SPST'], [1160, 417, 'AC_DEBUG'], [940, 460, 'INPUT'],
  [1000, 438, 'J4'], [1065, 466, 'SW1'], [1065, 491, 'GND'], [1065, 653, 'U3'], [1065, 673, 'AD633JNZ'], [1308, 567, 'R8'], [1308, 588, '1.2k'],
  [1400, 567, 'OUTPUT_DEBUG'], [1390, 588, 'J6'], [1450, 636, 'OUTPUT'], [1450, 615, 'J5'], [1260, 642, 'R9'], [1260, 663, '2k'], [1265, 706, 'R11'], [1265, 728, '10k'],
  [1233, 792, 'GND'], [1355, 760, 'GND'], [1392, 674, 'C6'], [1392, 696, '10u'], [1202, 471, 'IN3'], [975, 600, '-9VA'], [1165, 600, '+9VA'], [425, 513, '-9VA'], [545, 663, '+9VA'],
  [478, 548, 'V+'], [478, 625, 'V-'], [525, 575, 'OUT'], [525, 600, 'OUT'], [1065, 572, 'X1 X2'], [1040, 600, 'Y1'], [1090, 600, 'W'],
];
const labels7: [number, number, string][] = [
  [270, 426, 'n2'], [210, 560, 'n3'], [210, 582, 'n'], [490, 426, 'n7'], [590, 426, 'n10'], [628, 505, 'n11'], [725, 505, 'n12'], [855, 484, 'n_input'],
  [365, 708, 'n5'], [270, 708, 'n4'], [1120, 529, 'n15'], [1245, 612, 'n13'], [1145, 677, 'n14'], [1358, 612, 'n_out'], [452, 681, 'n8'],
];

const wires8 = [[360, 585, 360, 612, 420, 612, 420, 585], [541, 575, 541, 612, 603, 612, 603, 575], [541, 548, 603, 548], [541, 575, 541, 548], [603, 575, 603, 548]];
const caps8 = [[420, 572], [541, 575], [603, 575]];
const gnd8 = [[101, 625], [172, 625], [230, 625], [300, 625], [392, 625], [574, 625]];
const text8: [number, number, string][] = [
  [101, 655, 'GND'], [172, 655, 'GND'], [230, 655, 'GND'], [300, 655, 'GND'], [392, 655, 'GND'], [574, 655, 'GND'], [574, 512, '-9VA'],
  [133, 591, '0.1u'], [203, 597, '10u'], [262, 591, '0.1u'], [332, 588, '10u'], [453, 570, 'C37'], [453, 591, '0.1u'], [574, 570, 'C38'], [574, 591, '0.1u'], [635, 570, 'C35'], [635, 591, '0.1u'],
  [581, 285, 'SW3'], [581, 308, 'Power Switch B'], [423, 282, 'SW2'], [435, 303, 'Switch A'], [522, 353, '+9V'], [525, 441, '-9V'], [483, 335, '+9VA'], [483, 420, '-9VA'], [643, 335, '+9VA'], [643, 430, '-9VA'],
];

const ercRows: [number, number, string][] = [[827, 210, '+9V'], [955, 210, '+9V'], [882, 264, 'GND'], [827, 318, '+9VA'], [955, 318, '-9VA'], [827, 370, '+9VA'], [955, 370, '-9VA']];
const ledCols = [1145, 1198, 1255, 1312, 1384, 1436];
const mounts: [number, string][] = [[477, 'H1'], [523, 'H2'], [582, 'H3'], [633, 'H4']];
const ticksTop = [273, 639, 1007, 1376];
const numsTop: [number, string][] = [[92, '2'], [460, '3'], [828, '4'], [1195, '5'], [1560, '6']];
const ticksBot = [320, 597, 871, 1148, 1424];
const numsBot: [number, string][] = [[185, '1'], [462, '2'], [738, '3'], [1012, '4'], [1288, '5'], [1562, '6']];
const sideTicks = [358, 476, 595, 713];

const Line = ({ x1, y1, x2, y2, c }: { x1: number; y1: number; x2: number; y2: number; c: string }) => (
  <line x1={x1} y1={y1} x2={x2} y2={y2} stroke={c} strokeWidth="1" />
);

const Schematic = () => (
  <SchSvg>
    <defs>
      <pattern id="schdots" x="994" y="76" width="17.95" height="18" patternUnits="userSpaceOnUse">
        <rect width="1" height="1" fill="#a9a9a5" />
      </pattern>
    </defs>
    <g transform="translate(-978 -60)">
      <rect x="978" y="60" width="870" height="908" fill="url(#schdots)" />
      <rect x="960" y="219.500" width="871.500" height="589.500" fill="none" stroke="#a8a8a4" />
      <rect x="1022.500" y="247.500" width="780" height="533" fill="none" stroke="#840000" strokeWidth="1.250" />
      <rect x="1029.500" y="253.500" width="767" height="522" fill="none" stroke="#840000" strokeWidth="1.250" />
      {ticksTop.map(x => { const [a] = z7(x, 0); return <Line key={x} x1={a} y1={247} x2={a} y2={253} c="#840000" />; })}
      {numsTop.map(([x, t]) => { const [a] = z7(x, 0); return <Red key={t} x={a} y={252} $s={5.500}>{t}</Red>; })}
      {ticksBot.map(x => { const [a] = z8(x, 0); return <Line key={x} x1={a} y1={776} x2={a} y2={781} c="#840000" />; })}
      {numsBot.map(([x, t]) => { const [a] = z8(x, 0); return <Red key={t} x={a} y={780.500} $s={5.500}>{t}</Red>; })}
      {sideTicks.map(y => <Line key={y} x1={1796} y1={y} x2={1802} y2={y} c="#840000" />)}
      <Red x={1797.500} y={318} $s={5.500}>B</Red>
      <Red x={1797.500} y={437} $s={5.500}>C</Red>
      <Red x={1797.500} y={556} $s={5.500}>D</Red>
      <Red x={1797.500} y={675} $s={5.500}>E</Red>

      <BlueTitle x="1459" y="293">Einstein-Boltzmann Main Board</BlueTitle>

      <Dash r={[-300, 325, 905, 856]} z={z7} />
      <Dash r={[916, 325, 1498, 856]} z={z7} />
      <BlueNote x="1428" y="336" $end>Einstein Amplifier (Buffer + 2 Inverting Amplifiers)</BlueNote>
      <BlueNote x="1553" y="336">Analog Multiplier</BlueNote>

      {wires7.map((p, i) => <Wire key={i} p={p} z={z7} />)}
      <Wire p={[125, 433, 125, 416, 145, 416]} z={z7} c="#840000" />
      <Wire p={[160, 416, 180, 416, 180, 433]} z={z7} c="#840000" />
      <Wire p={[125, 433, 125, 450, 135, 450]} z={z7} c="#840000" />
      <Wire p={[172, 450, 180, 450, 180, 433]} z={z7} c="#840000" />
      <Wire p={[125, 717, 125, 700, 145, 700]} z={z7} c="#840000" />
      <Wire p={[160, 700, 180, 700, 180, 717]} z={z7} c="#840000" />
      <Wire p={[125, 717, 125, 735, 135, 735]} z={z7} c="#840000" />
      <Wire p={[172, 735, 180, 735, 180, 717]} z={z7} c="#840000" />
      {res7h.map((a, i) => <Res key={i} a={a} z={z7} />)}
      {res7v.map((a, i) => <Res key={i} a={a} z={z7} v />)}
      {cap7h.map((a, i) => <Cap key={i} a={a} z={z7} />)}
      <Cap a={[1353, 690]} z={z7} v />
      {gnd7.map((a, i) => <Gnd key={i} a={a} z={z7} />)}
      <Wire p={[-40, 522, 57, 522, 57, 632, -40, 632]} z={z7} c="#840000" />
      <Wire p={[453, 535, 548, 535, 548, 643, 453, 643, 453, 535]} z={z7} c="#840000" />
      <Wire p={[1028, 556, 1102, 556, 1102, 632, 1028, 632, 1028, 556]} z={z7} c="#840000" />
      <Wire p={[1035, 445, 1075, 432]} z={z7} c="#840000" />
      <Wire p={[1042, 541, 1088, 541, 1065, 518, 1042, 541]} z={z7} c="#840000" />
      <Wire p={[960, 470, 975, 455, 985, 455]} z={z7} c="#840000" />
      <Wire p={[1142, 470, 1142, 425, 1155, 425]} z={z7} c="#840000" />
      <Wire p={[1400, 622, 1400, 590]} z={z7} c="#840000" />
      <Wire p={[445, 513, 465, 513, 465, 535]} z={z7} c="#840000" />
      <Wire p={[485, 520, 498, 520, 498, 535]} z={z7} c="#840000" />
      <Wire p={[490, 650, 490, 662, 515, 662]} z={z7} c="#840000" />
      <Wire p={[990, 600, 1028, 600]} z={z7} c="#840000" />
      <Wire p={[1102, 600, 1135, 600]} z={z7} c="#840000" />
      {dots7.map((a, i) => <Dot key={i} a={a} z={z7} />)}
      {text7.map(([x, y, t], i) => <T key={i} a={[x, y]} z={z7} t={t} />)}
      {labels7.map(([x, y, t], i) => <T key={i} a={[x, y]} z={z7} t={t} kind="l" />)}

      <Dash r={[81, 258, 710, 682]} z={z8} />
      <Dash r={[789, 178, 1053, 397]} z={z8} />
      <Dash r={[1093, 118, 1510, 415]} z={z8} />
      <Dash r={[789, 451, 952, 688]} z={z8} />
      <BlueNote x="1403" y="596">ERC Atributes</BlueNote>
      <BlueNote x="1559.500" y="577">Power LEDs</BlueNote>
      <BlueNote x="1402" y="687">Mount Holes</BlueNote>

      <rect x="1210" y="647" width="14" height="50" fill="#ffffc2" stroke="#840000" />
      <rect x="1287" y="647" width="19" height="50" fill="#ffffc2" stroke="#840000" />
      <path d="M1287 664l19-8M1287 684l19-8M1224 664l-14 8M1224 684l-14 8" stroke="#840000" />
      <path d="M1275 658h12M1275 687h12M1306 651h11M1306 683h11M1224 651h11M1224 683h11" stroke="#840000" />
      {wires8.map((p, i) => <Wire key={i} p={p} z={z8} />)}
      <Dot a={[574, 548]} z={z8} /><Dot a={[574, 612]} z={z8} /><Dot a={[392, 612]} z={z8} />
      {caps8.map((a, i) => <Cap key={i} a={a} z={z8} v />)}
      {gnd8.map((a, i) => <Gnd key={i} a={a} z={z8} />)}
      {text8.map(([x, y, t], i) => <T key={i} a={[x, y]} z={z8} t={t} />)}

      {ercRows.map(([x, y, t], i) => (
        <g key={i}>
          <T a={[x, y]} z={z8} t="PWR_FLAG" />
          <Place at={[x + 32, y]} z={z8}><path d="M-2.500 0 0-2.500 2.500 0 0 2.500zM2.500 0h8" /></Place>
          <T a={[x + 45, y - 10]} z={z8} t={t} kind="l" />
          <T a={[x + 68, y]} z={z8} t={t} />
        </g>
      ))}

      {ledCols.map((x, i) => (
        <g key={x}>
          <T a={[x, 163 + (i % 2) * 5]} z={z8} t={['-9V', '+9V', '+9VA', '-9VA', '+9VA', '-9VA'][i]} />
          <Pwr a={[x, 190]} z={z8} />
          <Place at={[x, 235]} z={z8}><path d="M0-13V-4M0 4V9M-3.500-3.500h7L0 3.500zM-3.500 3.500h7" /></Place>
          <T a={[x - 10, 215]} z={z8} t="LED" />
          <T a={[x - 10, 237]} z={z8} t={`D${i + 1}`} />
          <T a={[x + 5, 260]} z={z8} t="Net-(D)" kind="l" />
          <Res a={[x, 305]} z={z8} v />
          <T a={[x + 18, 291]} z={z8} t={`R${15 + i}`} />
          <T a={[x + 16, 312]} z={z8} t="2k" />
          <Gnd a={[x, 348]} z={z8} />
          <T a={[x, 370]} z={z8} t="GND" />
        </g>
      ))}

      {mounts.map(([y, t]) => {
        const [x, yy] = z8(811, y);
        return (
          <g key={t}>
            <circle cx={x} cy={yy} r="4.500" fill="#840000" />
            <circle cx={x} cy={yy} r="1.500" fill="#f5f4ef" />
            <T a={[838, y - 9]} z={z8} t={t} />
            <T a={[866, y + 11]} z={z8} t="MountingHole" />
          </g>
        );
      })}
      <T a={[887, 673]} z={z8} t="U5" s={7} />

      <rect x="1492.500" y="686.500" width="304" height="89" fill="none" stroke="#840000" strokeWidth="1.250" />
      <path d="M1492 729.500h304M1492 747.500h304M1492 757.500h304M1492 767.500h304M1548.500 757v10M1730 757v19" stroke="#840000" fill="none" strokeWidth="1.250" />
      <Red x="1496" y="719">Part of the Einstein-Boltzmann Project</Red>
      <Red x="1496" y="727">Carlos Crespo</Red>
      <Red x="1496" y="736">Sheet: /</Red>
      <Red x="1496" y="744">File: main-board.kicad_sch</Red>
      <Red x="1496" y="755" $s={8.500} $i>Title: Einstein-Boltzmann Main Board</Red>
      <Red x="1496" y="765">Size: A4</Red>
      <Red x="1558" y="765">Date: 2024-02-08</Red>
      <Red x="1736" y="765">Rev: 0.1</Red>
      <Red x="1496" y="773.500">KiCad E.D.A.  kicad 7.0.11</Red>
      <Red x="1735" y="773.500">Id: 1/1</Red>

      <path d="M994.500 178v77M978 218.500h56" stroke="#000" strokeWidth="1" />
    </g>
  </SchSvg>
);

const P = '#c9619f';
const Board = () => (
  <PcbSvg>
    <defs>
      <pattern id="pcbdots" x="40" y="124" width="26.2" height="26.2" patternUnits="userSpaceOnUse">
        <rect width="1" height="1" fill="#9aa4ab" />
      </pattern>
    </defs>
    <g transform="translate(-33 -105)">
      <rect x="33" y="105" width="684" height="863" fill="url(#pcbdots)" />
      <rect x="20" y="228.500" width="615.500" height="550.500" fill="none" stroke="#8a8f8f" />
      <rect x="20" y="255.500" width="589.500" height="498" fill="none" stroke={P} />
      <rect x="20" y="260.500" width="584.500" height="488" fill="none" stroke={P} />
      {[145, 276, 407, 538].map(x => <Line key={x} x1={x + 0.5} y1={748} x2={x + 0.5} y2={753} c={P} />)}
      {[82, 212, 343, 475].map((x, i) => <Pink key={x} x={x} y={752.500} $s={5.500}>{i + 2}</Pink>)}
      {[145, 276, 407, 538].map(x => <Line key={x} x1={x + 0.5} y1={255} x2={x + 0.5} y2={260} c={P} />)}
      <rect x="321.500" y="664.500" width="283" height="84" fill="none" stroke={P} />
      <path d="M321 705.500h283M321 720.500h283M321 731.500h283M321 739.500h283M373.500 731v8M541.500 731v17" stroke={P} fill="none" />
      <Pink x="324" y="695" $s={6}>Part of the Einstein-Boltzmann Project</Pink>
      <Pink x="324" y="703" $s={6}>Carlos Crespo</Pink>
      <Pink x="324" y="711" $s={6}>Sheet:</Pink>
      <Pink x="324" y="718" $s={6}>File: main-board.kicad_pcb</Pink>
      <Pink x="325" y="728" $s={7.500} $i>Title: Einstein-Boltzmann Main Board</Pink>
      <Pink x="324" y="738" $s={6}>Size: A4</Pink>
      <Pink x="382" y="738" $s={6}>Date: 2024-02-14</Pink>
      <Pink x="548" y="738" $s={6}>Rev: 0.1</Pink>
      <Pink x="324" y="746" $s={6}>KiCad E.D.A.  kicad 7.0.11</Pink>
      <Pink x="547" y="746" $s={6}>Id: 1/1</Pink>
    </g>
  </PcbSvg>
);

const Eye = () => (
  <EyeSvg viewBox="0 0 16 16">
    <circle cx="8" cy="8" r="8" fill="#545454" />
    <path d="M2.500 8C4 5.500 6 4.500 8 4.500s4 1 5.500 3.500C12 10.500 10 11.500 8 11.500S4 10.500 2.500 8z" fill="#f0f0f0" />
    <circle cx="8" cy="8" r="2.200" fill="#545454" />
    <circle cx="8" cy="8" r="1" fill="#f0f0f0" />
  </EyeSvg>
);

const layers: [string, string][] = [['F.Cu', '#c83232'], ['B.Cu', '#4d7fc4'], ['F.Adhesive', '#84007c'], ['B.Adhesive', '#000084'], ['F.Paste', '#a79a93']];
const filterItems: [string, boolean][] = [['All items', true], ['Locked', false], ['Footprints', true], ['Text', true], ['Tracks', true], ['Vias', true], ['Pads', true], ['Graphics', true], ['Zones', true], ['Rule Areas', true], ['Dimensions', true], ['Other items', true]];

const logLines = [
  "Add J2 (footprint 'footprints:Banana_Jack_1Pin').",
  "Add J1 (footprint 'footprints:Banana_Jack_1Pin').",
  "Add H4 (footprint 'MountingHole:MountingHole_5.3mm_M5').",
  "Add H3 (footprint 'MountingHole:MountingHole_5.3mm_M5').",
  "Add H2 (footprint 'MountingHole:MountingHole_5.3mm_M5').",
  "Add H1 (footprint 'MountingHole:MountingHole_5.3mm_M5').",
  "Add D6 (footprint 'footprints:LED_D3.0mm').",
  "Add D5 (footprint 'footprints:LED_D3.0mm').",
  ' ', ' ', 'Total warnings: 0, errors: 0.',
];

const Cb = ({ off }: { off?: boolean }) => <Box $off={off}>{off ? null : <Check />}</Box>;

export default function App() {
  return (
    <Desktop>
      <Global />
      <Win $w={937}>
        <Menu pad={6} items={['File', 'Edit', 'View', 'Place', 'Route', 'Inspect', 'Tools', 'Preferences', 'Help']} />
        <Toolbar $h={43}>
          <Tools spec="save | pcbgear | page print plot | undo ~redo | find | refresh zin zout zfit zobj zsel | rotl rotr flip mirror group ungroup lock unlock | fpupd lib | net check" />
          <HSep />
          <OverflowBtn><Caret /></OverflowBtn>
        </Toolbar>
        <AuxBar>
          <Combo $w={241}>Track: use netclass width<Caret /></Combo>
          <AuxBtn $active><Ic n="trackw" /></AuxBtn>
          <AuxSep />
          <Combo $w={352}>Via: use netclass sizes<Caret /></Combo>
          <AuxSep />
          <Combo $w={275}>Grid: 0.0100 mm (0.0004 in)<Caret /></Combo>
        </AuxBar>
        <Main>
          <VTool $w={33} $line="r" $top={3}>
            <Tools vert spec="*dots polar in mil *mm cursor | origin | *rats ratsc | track via | *fp fpo | pads zone tracks | *layers wrench" />
          </VTool>
          <Board />
          <VTool $w={35} $top={3}>
            <Tools vert spec="*arrow cross | padsb trk" />
            <Gap $h={467} />
            <Tools vert spec="dim ruler" />
          </VTool>
          <Side>
            <PanelHead>Appearance</PanelHead>
            <TabStrip>
              <TabBack><TriL /></TabBack>
              <TabLabel>Layers</TabLabel>
              <TabFwd><Tri $c="#8f8f8f" /></TabFwd>
            </TabStrip>
            {layers.map(([n, c], i) => (
              <LayerRow key={n} $on={i === 0}>
                <ArrowSlot>{i === 0 ? <Tri $c="#3f3ff5" /> : null}</ArrowSlot>
                <Swatch $c={c} />
                <Eye />
                {n}
              </LayerRow>
            ))}
            <Spacer />
            <Lower>
              <SideCombo $w={165}>All Layers<Caret /></SideCombo>
              <PresetLabel>Viewports (Shift+Tab):</PresetLabel>
              <SideCombo $w={165}>---<Caret /></SideCombo>
            </Lower>
            <PanelHead>Selection Filter</PanelHead>
            <Filter>
              {filterItems.map(([t, on]) => (
                <FilterItem key={t}><Cb off={!on} />{t}</FilterItem>
              ))}
            </Filter>
          </Side>
        </Main>
        <Messages>
          <Cell $w={11} />
          <MsgCol $w={67}>Pads<br />136</MsgCol>
          <MsgCol $w={65}>Vias<br />317</MsgCol>
          <MsgCol $w={141}>Track Segments<br />209</MsgCol>
          <MsgCol $w={66}>Nets<br />36</MsgCol>
          <MsgCol $w={80}>Unrouted<br />0</MsgCol>
        </Messages>
        <Status>
          <Cell $w={3} />
          <Cell $w={92}>Z 0.73</Cell>
          <Cell $w={208} $sp={0.15}>X 187.1000  Y -52.4100</Cell>
          <Cell $w={335} $sp={0.15}>dx 187.1000   dy -52.4100   dist 194.3019</Cell>
          <Cell $w={238}>grid X 0.0100 Y 0.0100</Cell>
          <Cell $w={40}>mm</Cell>
        </Status>
      </Win>

      <Win $w={938} $right>
        <Menu pad={8} items={['File', 'Edit', 'View', 'Place', 'Inspect', 'Tools', 'Preferences', 'Help']} />
        <Toolbar $h={34}>
          <Tools spec="save | schgear | page print plot | paste | ~undo ~redo | find replace | refresh zin zout zfit zobj zsel | left up right | rotl rotr flip mirror | sym lib fpupd" />
        </Toolbar>
        <Main $top>
          <VTool $w={34} $line="r" $top={2}>
            <Tools vert spec="*dots in mil *mm cursor | opamp" />
          </VTool>
          <Schematic />
          <VTool $w={33} $line="l" $top={4}>
            <Tools vert spec="*arrow wirebus | opamp gnd line bus entry nc junction label netclass hlabel global sheet imp | T tbox rect circ arc bez image del" />
          </VTool>
        </Main>
        <Messages />
        <Status>
          <Cell $w={4} />
          <Cell $w={91}>Z 0.79</Cell>
          <Cell $w={209} $sp={0.15}>X 0.0000  Y 0.0000</Cell>
          <Cell $w={336} $sp={0.15}>dx 0.0000   dy 0.0000   dist 0.0000</Cell>
          <Cell $w={237}>grid 0.6350</Cell>
          <Cell $w={40}>mm</Cell>
        </Status>
      </Win>

      <Dialog>
        <TitleBar>Update PCB from Schematic</TitleBar>
        <DlgBody>
          <Frame $h={93}>
            <Legend>Options</Legend>
            <OptRow><Focus><Cb />Re-link footprints to schematic symbols based on their reference designators</Focus></OptRow>
            <OptRow><Cb />Delete footprints with no symbols</OptRow>
            <OptRow><Cb />Replace footprints with those specified in the schematic</OptRow>
          </Frame>
          <Gap $h={18} />
          <Frame $h={288}>
            <Legend>Changes To Be Applied</Legend>
            <Log>
              <LogInner>{logLines.map((l, i) => <div key={i}>{l}</div>)}</LogInner>
            </Log>
            <ShowRow>
              <ShowCell $w={51}>Show:</ShowCell>
              <ShowCell $w={75}><Cb />All</ShowCell>
              <ShowCell $w={114}><Cb />Errors<Badge>0</Badge></ShowCell>
              <ShowCell $w={134}><Cb />Warnings<Badge>0</Badge></ShowCell>
              <ShowCell $w={106}><Cb />Actions</ShowCell>
              <ShowCell $w={86}><Cb />Infos</ShowCell>
              <Btn $w={85} $h={33}>Save...</Btn>
            </ShowRow>
          </Frame>
          <BtnRow>
            <Btn $w={85} $h={34}>Close</Btn>
            <Btn $w={111} $h={34}>Update PCB</Btn>
          </BtnRow>
        </DlgBody>
      </Dialog>
    </Desktop>
  );
}
